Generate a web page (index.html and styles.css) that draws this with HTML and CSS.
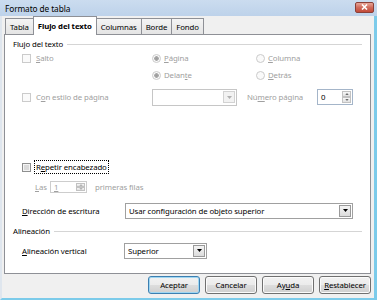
FILE: index.html
```html
<!DOCTYPE html>
<html lang="es">
<head>
    <meta charset="UTF-8">
    <title>Formato de tabla</title>
    <link rel="stylesheet" href="styles.css">
</head>
<body>
    <div class="window">
        <div class="titlebar">
            <span class="title">Formato de tabla</span>
            <span class="close">
                <svg width="7" height="6" viewBox="0 0 7 6"><path d="M1 0.5l5 5M6 0.5l-5 5" stroke="#fff" stroke-width="1.6"/></svg>
            </span>
        </div>
        <div class="client">
            <div class="tabs">
                <span class="tab">Tabla</span>
                <span class="tab active">Flujo del texto</span>
                <span class="tab">Columnas</span>
                <span class="tab">Borde</span>
                <span class="tab">Fondo</span>
            </div>
            <div class="panel">
                <div class="legend"><span>Flujo del texto</span></div>

                <div class="row row-a">
                    <label class="opt col1 off"><span class="chk off"></span><span><u>S</u>alto</span></label>
                    <label class="opt col2 off radio-opt"><span class="radio on"></span><span><u>P</u>ágina</span></label>
                    <label class="opt off radio-opt"><span class="radio"></span><span><u>C</u>olumna</span></label>
                </div>
                <div class="row row-b">
                    <span class="col1"></span>
                    <label class="opt col2 off radio-opt"><span class="radio on"></span><span>Delan<u>t</u>e</span></label>
                    <label class="opt off radio-opt"><span class="radio"></span><span><u>D</u>etrás</span></label>
                </div>
                <div class="row row-c">
                    <label class="opt col1 off"><span class="chk off"></span><span>C<u>o</u>n estilo de página</span></label>
                    <span class="combo combo-style off">
                        <span class="combo-text"></span>
                        <span class="drop"><svg width="5" height="3" viewBox="0 0 5 3"><path d="M0 0h5L2.5 3z"/></svg></span>
                    </span>
                    <span class="label-num off">Nú<u>m</u>ero página</span>
                    <span class="spin spin-num">
                        <span class="spin-text">0</span>
                        <span class="spin-btns">
                            <span class="sb"><svg width="5" height="3" viewBox="0 0 5 3"><path d="M0 3h5L2.5 0z"/></svg></span>
                            <span class="sb"><svg width="5" height="3" viewBox="0 0 5 3"><path d="M0 0h5L2.5 3z"/></svg></span>
                        </span>
                    </span>
                </div>

                <div class="row row-d">
                    <label class="opt"><span class="chk tri"></span><span class="focus">R<u>e</u>petir encabezado</span></label>
                </div>
                <div class="row row-e">
                    <span class="las off"><u>L</u>as</span>
                    <span class="spin spin-rows off">
                        <span class="spin-text"><u>1</u></span>
                        <span class="spin-btns">
                            <span class="sb"><svg width="5" height="3" viewBox="0 0 5 3"><path d="M0 3h5L2.5 0z"/></svg></span>
                            <span class="sb"><svg width="5" height="3" viewBox="0 0 5 3"><path d="M0 0h5L2.5 3z"/></svg></span>
                        </span>
                    </span>
                    <span class="rows-label off">primeras filas</span>
                </div>
                <div class="row row-f">
                    <span class="field-label"><u>D</u>irección de escritura</span>
                    <span class="combo combo-dir">
                        <span class="combo-text">Usar configuración de objeto superior</span>
                        <span class="drop"><svg width="5" height="3" viewBox="0 0 5 3"><path d="M0 0h5L2.5 3z"/></svg></span>
                    </span>
                </div>

                <div class="legend legend-2"><span>Alineación</span></div>
                <div class="row row-g">
                    <span class="field-label"><u>A</u>lineación vertical</span>
                    <span class="combo combo-align">
                        <span class="combo-text">Superior</span>
                        <span class="drop"><svg width="5" height="3" viewBox="0 0 5 3"><path d="M0 0h5L2.5 3z"/></svg></span>
                    </span>
                </div>
            </div>
            <div class="buttons">
                <button class="default">Aceptar</button>
                <button>Cancelar</button>
                <button>Ay<u>u</u>da</button>
                <button><u>R</u>establecer</button>
            </div>
        </div>
    </div>
</body>
</html>
```

FILE: styles.css
```css
* {
    box-sizing: border-box;
}
body {
    margin: 0;
    font-family: "Noto Sans", "Open Sans", sans-serif;
    font-size: 7.8px;
    letter-spacing: -0.1px;
    color: #000;
    background: #fff;
}
u {
    text-decoration-thickness: 1px;
    text-underline-offset: 1px;
}
.window {
    width: 377px;
    height: 300px;
    display: flex;
    flex-direction: column;
}
.titlebar {
    height: 16px;
    display: flex;
    align-items: center;
    justify-content: space-between;
    padding: 0 3px 0 5px;
    background: linear-gradient(#cbdcef, #bdd2ea);
}
.title {
    font-size: 8.3px;
}
.close {
    width: 19px;
    height: 11px;
    margin-top: -2px;
    border: 1px solid #8b4038;
    border-radius: 2px;
    background: linear-gradient(#e8a597, #d06b5c 50%, #c24a38);
    display: flex;
    align-items: center;
    justify-content: center;
}
.client {
    flex: 1;
    background: #f0f0f0;
    border-left: 2px solid #dfe6ee;
    border-right: 3px solid #7ccbea;
    border-bottom: 2px solid #7ccbea;
}
.tabs {
    height: 18px;
    display: flex;
    align-items: flex-end;
    padding-left: 3px;
}
.tab {
    height: 16px;
    padding: 0 4px;
    margin-right: -1px;
    border: 1px solid #8e9096;
    border-bottom: none;
    background: linear-gradient(#f4f4f4, #e4e4e4);
    display: flex;
    align-items: center;
}
.tab.active {
    height: 19px;
    margin-bottom: -1px;
    padding: 0 4px;
    background: #fff;
    font-weight: bold;
    position: relative;
    z-index: 1;
}
.panel {
    margin-left: 2px;
    width: 367px;
    height: 240px;
    border: 1px solid #8e9096;
    background: #fff;
    padding-top: 3px;
}
.legend {
    height: 12px;
    display: flex;
    align-items: center;
    padding: 0 8px;
}
.legend::after {
    content: "";
    flex: 1;
    height: 1px;
    margin-left: 4px;
    background: #d5d5d5;
}
.legend-2 {
    margin-top: 4px;
}
.row {
    display: flex;
    align-items: center;
    padding-left: 17px;
}
.row-a { height: 16px; }
.row-b { height: 18px; }
.row-c { height: 26px; }
.row-d { height: 14px; margin-top: 50px; }
.row-e { height: 26px; padding-left: 30px; }
.row-f { height: 21px; }
.row-g { height: 19px; margin-top: 4px; }
.col1 {
    width: 130px;
}
.col2 {
    width: 104px;
}
.off {
    color: #a0a0a0;
}
.opt {
    display: flex;
    align-items: center;
    gap: 5px;
}
.radio-opt {
    gap: 3px;
}
.chk {
    width: 9px;
    height: 9px;
    border: 1px solid #8e8f8f;
    background: linear-gradient(135deg, #dcdcdc, #fbfbfb);
}
.chk.off {
    border-color: #cbcbcb;
    background: #fafafa;
}
.chk.tri {
    background: #dadada;
    box-shadow: inset 0 0 0 1px #f4f4f4;
}
.radio {
    width: 9px;
    height: 9px;
    border-radius: 50%;
    border: 1px solid #cbcbcb;
    background: #fafafa;
}
.radio.on {
    background: radial-gradient(circle, #9c9c9c 0, #a8a8a8 2px, #fafafa 2.6px);
}
.focus {
    outline: 1px dotted #000;
    outline-offset: 1px;
}
.combo {
    display: flex;
    align-items: center;
    height: 16px;
    border: 1px solid #a0a0a0;
    background: #fff;
    padding: 1px;
}
.combo-text {
    flex: 1;
    padding-left: 2px;
    white-space: nowrap;
    overflow: hidden;
}
.drop {
    width: 12px;
    height: 12px;
    border: 1px solid #9a9a9a;
    background: linear-gradient(#f4f4f4, #dcdcdc);
    display: flex;
    align-items: center;
    justify-content: center;
}
.combo.off {
    border-color: #c6c6c6;
}
.combo.off .drop {
    border-color: #d2d2d2;
    background: #f2f2f2;
}
.combo.off svg {
    fill: #b0b0b0;
}
.combo-style {
    width: 85px;
    height: 17px;
}
.label-num {
    width: 70px;
    margin-left: 10px;
}
.spin {
    display: flex;
    align-items: center;
    border: 1px solid #a4b5c9;
    background: #fff;
    padding: 1px;
}
.spin-text {
    flex: 1;
    padding-left: 2px;
}
.spin-btns {
    display: flex;
    flex-direction: column;
    height: 100%;
    width: 9px;
}
.sb {
    flex: 1;
    border: 1px solid #c2c2c2;
    background: linear-gradient(#f7f7f7, #e2e2e2);
    display: flex;
    align-items: center;
    justify-content: center;
}
.sb svg {
    fill: #6b6b6b;
    width: 4px;
    height: 2px;
}
.spin-num {
    width: 36px;
    height: 16px;
}
.spin-rows {
    width: 37px;
    height: 12px;
    border-color: #cdcdcd;
}
.spin-rows .sb svg {
    fill: #b3b3b3;
}
.las {
    width: 15px;
}
.rows-label {
    margin-left: 8px;
}
.field-label {
    width: 103px;
}
.row-g .field-label {
    width: 102px;
}
.combo-dir {
    width: 228px;
}
.combo-align {
    width: 83px;
}
.buttons {
    display: flex;
    justify-content: flex-end;
    gap: 5px;
    padding: 2px 3px 0 0;
}
button {
    width: 52px;
    height: 18px;
    padding: 0;
    font-family: inherit;
    font-size: 7.8px;
    letter-spacing: -0.1px;
    color: #000;
    border: 1px solid #707070;
    border-radius: 3px;
    background: linear-gradient(#f2f2f2, #ebebeb 50%, #dddddd 51%, #cfcfcf);
    box-shadow: inset 0 0 0 1px #fbfbfb;
}
button.default {
    border-color: #3c7fb1;
    box-shadow: inset 0 0 0 1px #9fd6f2;
}
```
